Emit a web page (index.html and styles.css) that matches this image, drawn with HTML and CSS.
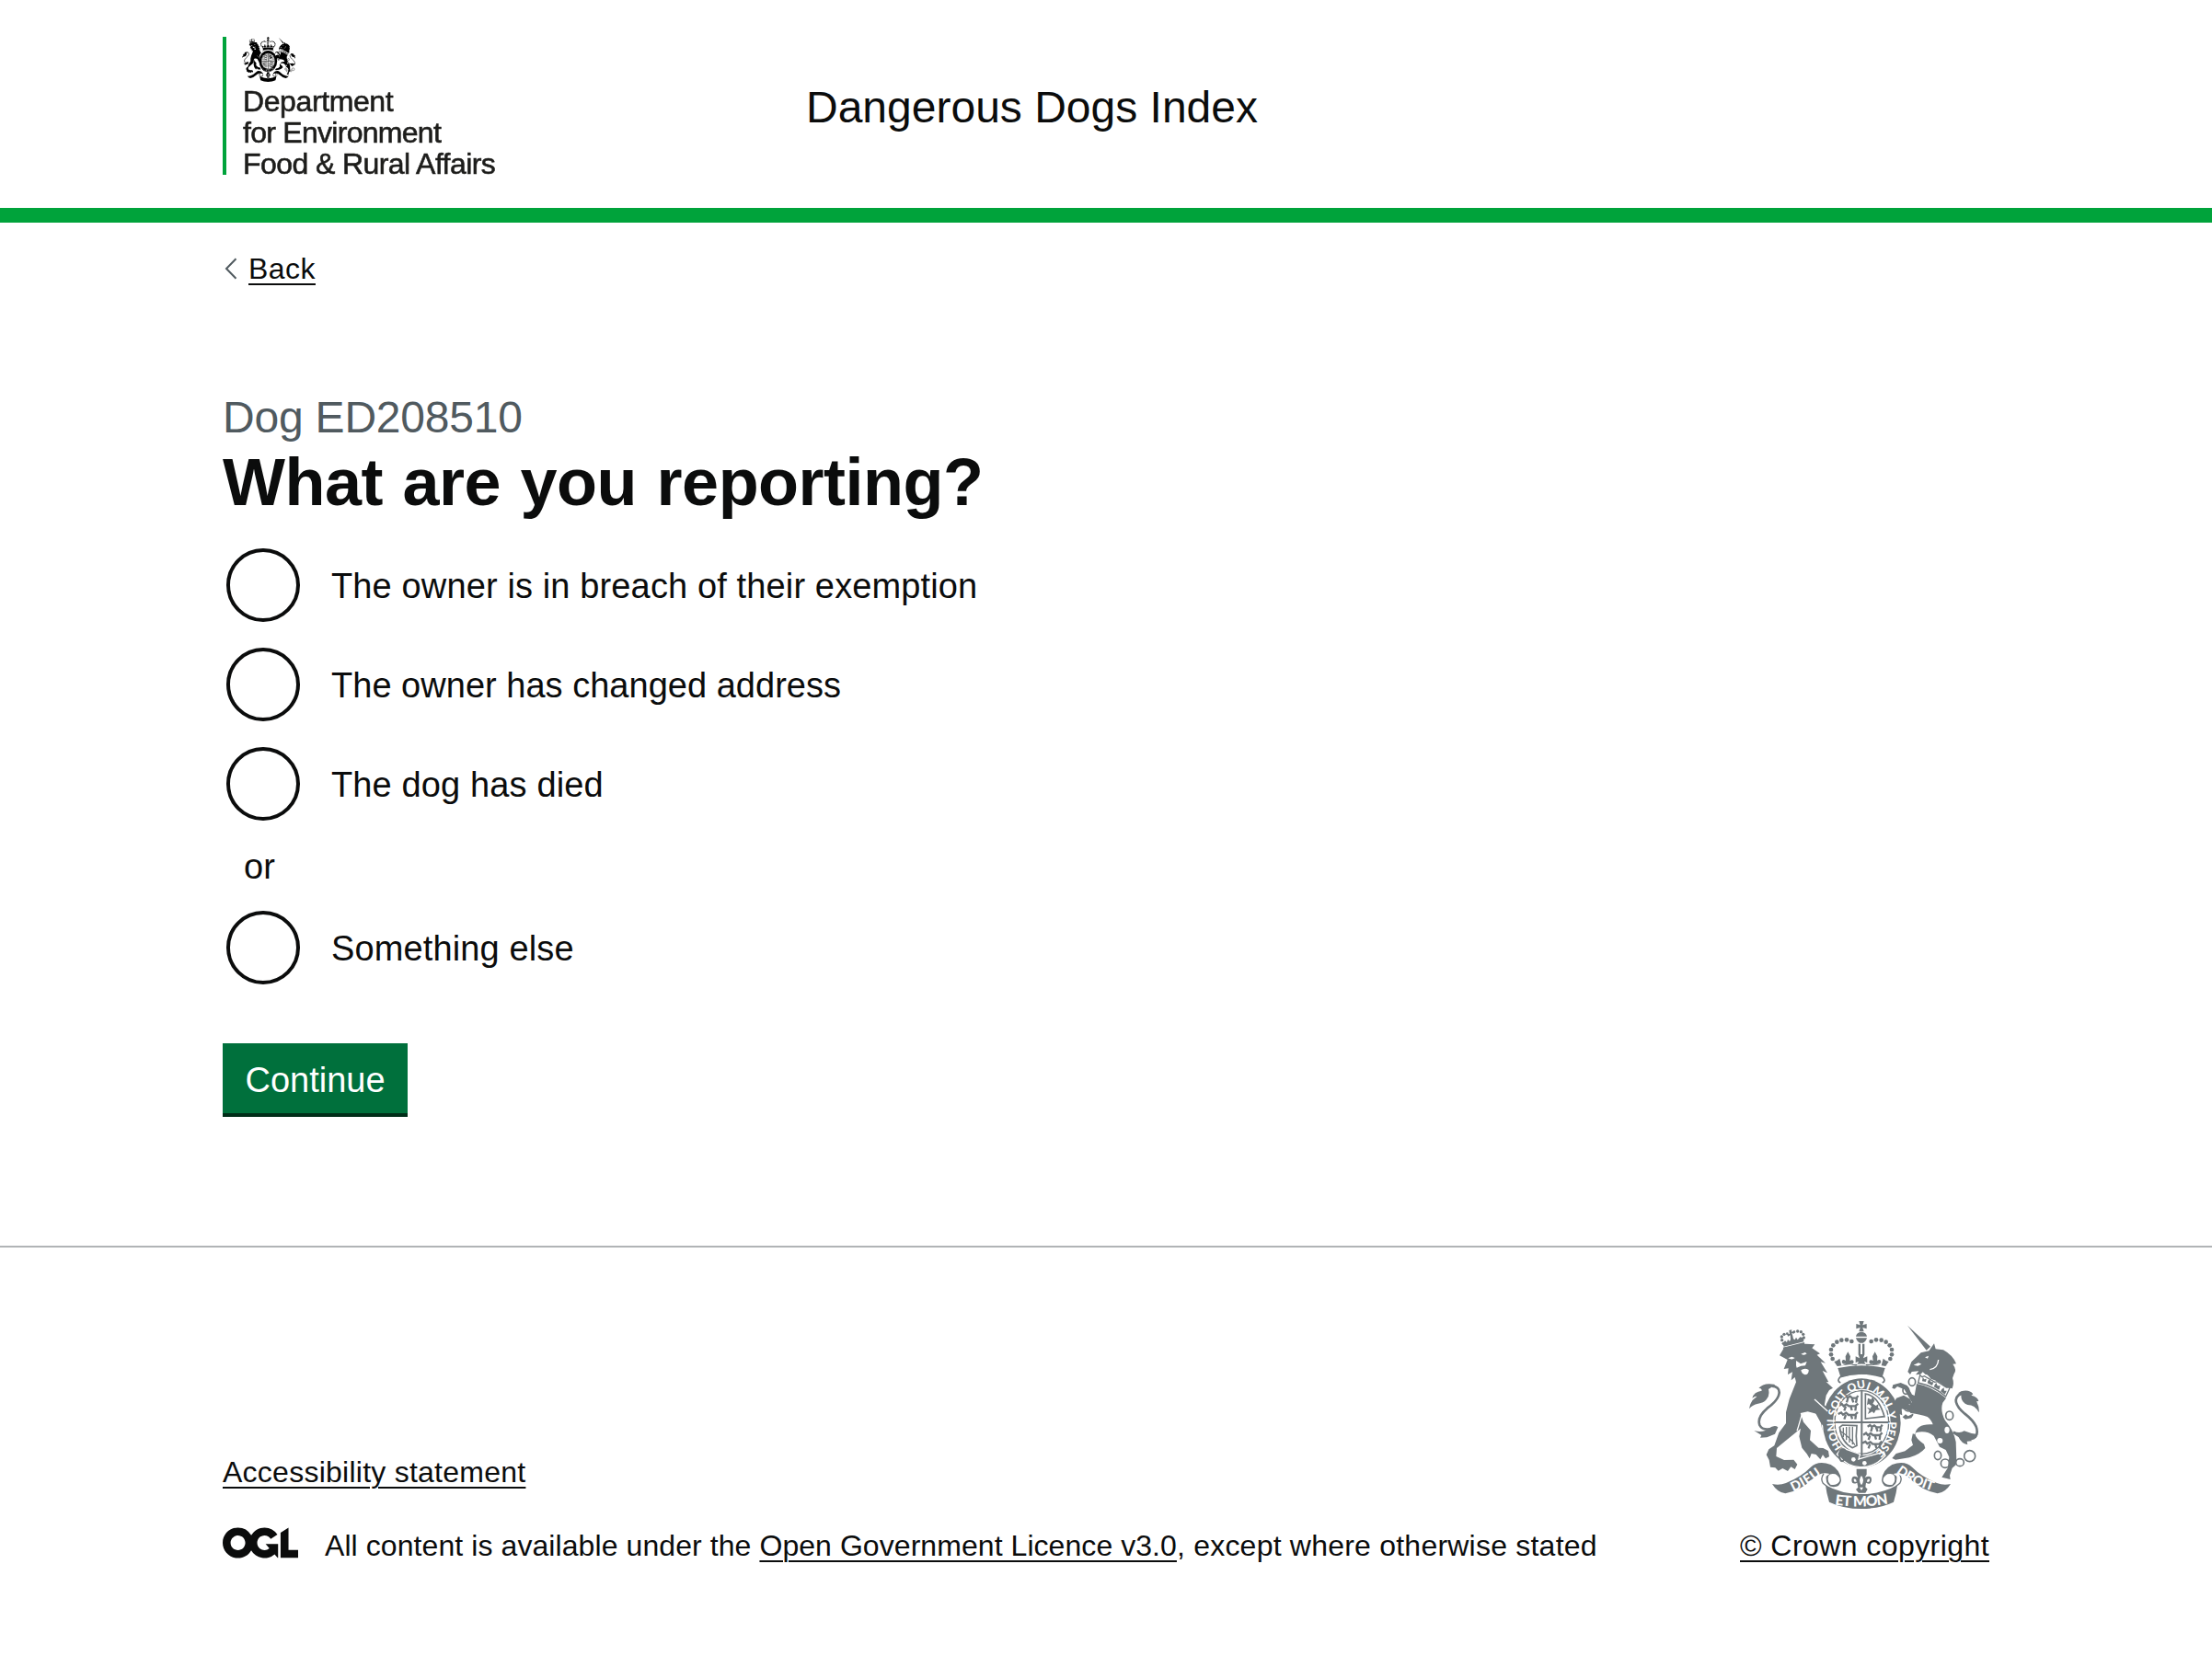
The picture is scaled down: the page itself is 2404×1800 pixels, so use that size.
FILE: index.html
```html
<!DOCTYPE html>
<html lang="en">
<head>
<meta charset="utf-8">
<title>What are you reporting? - Dangerous Dogs Index</title>
<link rel="stylesheet" href="styles.css">
</head>
<body>
<svg class="sprite" aria-hidden="true">
  <symbol id="crest" viewBox="63 48 750 612">
    <g fill="currentColor">
      <!-- imperial crown -->
      <path d="M421 48h16l-4 13 13-4v16l-13-4 4 13h-16l4-13-13 4V57l13 4z"/>
      <path d="M411 98q2-14 18-15 16 1 18 15zM411 103h36q-3 12-13 16h-10q-10-4-13-16zM419 122h7v35h-7zM432 122h7v35h-7z"/>
      <g id="beads">
        <circle cx="397" cy="114" r="7"/><circle cx="381" cy="109" r="7"/><circle cx="364" cy="110" r="7"/><circle cx="349" cy="116" r="7"/><circle cx="337" cy="127" r="7"/><circle cx="330" cy="141" r="7"/><circle cx="330" cy="157" r="7"/><circle cx="335" cy="171" r="7"/>
      </g>
      <use href="#beads" transform="matrix(-1 0 0 1 858 0)"/>
      <path d="M352 201q77-17 154 0l-9 29q-67-18-136 0z"/>
      <path d="M340 180q10-2 18-10l6 23q10-2 14-6-12 4-13-7 2-10 13-3l-1-14 8-15 8 15-2 14q12-6 13 4-1 11-14 6 8 7 24 6l6-14-10 5v-21l13 6-4-13h20l-4 13 13-6v21l-10-5 6 14q16 1 24-6-13 5-14-6 1-10 13-4l-2-14 8-15 8 15-1 14q11-7 13 3-1 11-13 7 4 4 14 6l6-23q8 8 18 10l-10 15q-79-15-158 0z"/>
      <path d="M361 249q-14-6-1-19 69-22 138 0 13 13-1 19" fill="none" stroke="currentColor" stroke-width="5"/>
      <!-- lion -->
      <path d="M173 134l70-17 2 12-66 17z"/>
      <g><circle cx="175" cy="121" r="5"/><circle cx="170" cy="110" r="5"/><circle cx="169" cy="99" r="5"/><circle cx="177" cy="91" r="5"/><circle cx="187" cy="89" r="4"/><circle cx="210" cy="83" r="4"/><circle cx="221" cy="81" r="5"/><circle cx="232" cy="83" r="5"/><circle cx="239" cy="91" r="5"/><circle cx="241" cy="102" r="5"/></g>
      <path d="M193 78l9-2-1 7 8-3 1 9-8-2 3 9 2 10 5 3 4-8 5 8 8-9 11 3 1 12-65 16-4-11 8-8 6 5 3-9 6 6 3-6-1-14-8 4-2-9 8 1z"/>
      <path d="M162 160l15-26 70-12 30 2-9 12 26 18-10 4 28 27-16-4 22 36-16-7 20 37-8-1 22 20-12 7-10 17-6 34 10 8 16 34-4 16 2 14-9 6-14-8-8 9-5-30-11-22-31-8-24 5 10 29 24 28-3 31 28 25 15 1 17 9 3 19-12 6-9-12-8 15-14-16-15-3-6 16-9-15-16-20-9-37 5-26-50 41-28 23-2 27 26 12 31-1 12 15-8 16-13-8-10 14-17-9-14 8-10-10-16-2-4-23-9-17 8-18 18-12 15-42 23-31 0-36 11-43 22-55-4-16-12 10 4-27-15 8 2-20-15 2 12-30z"/>
      <path d="M146 396q-38 13-49-9-9-26 25-55 37-27 39-50 1-21-24-22" fill="none" stroke="currentColor" stroke-width="8"/>
      <path d="M144 254q-35-6-50 13 10-2 10 8-26 3-31 24 10-7 15-5-22 14-25 40 11-14 29-17 18-2 27-13 12-12 7-34l22-14zM79 405q29 8 47-7 20-14 31-4l-10 22-26 11-22 1 4-8z"/>
      <!-- unicorn -->
      <path d="M579 62l75 69-13 12z"/>
      <path d="M592 181l31-30 26-6 17-24 5 18 25 3q31 17 42 45l-11 1q14 20 4 32l-5 14q6 17-1 34-11-4-20-2-20-22-50-30-10-16-17-14l-9-8-7 7-16 2 10-12-23 2-5 9-8-9z"/>
      <path d="M609 252q46 8 96 47l-11 15q-9 26 8 58 29 34 35 70l2 60-2 15-12 10-8 24 2 13-28-7 9-14 11-17 4-35-11-23-20-10-19-36q-24-19-57-11-13 11 25 38l4 13q-17 21-52 31l-45 7-11-5 13-15 29-8 26-20-5-16 9-43-3-36-16-17-22-6-15-14-10 9-8 22-11 4-5-15 17-17 11-19 26 4 22 14 6-10-12-20-12-21-23-10-9 8-8-3 3-10 25-7 21 9 16 29 8 4z"/>
      <path d="M590 348q32 4 54 12 12 8 18 25-30-2-44 8-12 8-14 24l-14-4z" fill="#fff"/>
      <path d="M620 224l7 6 7-3 34 20 8-2 30 19 12 0-14 30q-38-34-90-45z" fill="#fff" stroke="currentColor" stroke-width="4"/>
      <path d="M629 230l5 8 7-2-2 10-12-2zM651 238l5 9 8 0-4 11-16-8 2-8zM673 249l4 10 9 0-4 13-17-10 3-6zM698 265l1 10 8 0-6 12-14-10 4-7z"/>
      <path d="M596 350l-15 8-8-6-10 9 9 7 20-4 7-11z"/>
      <path d="M728 410q42 30 66 20 18-11 9-38-10-21-37-42-29-24-29-45 4-24 35-21" fill="none" stroke="currentColor" stroke-width="8"/>
      <path d="M754 277q27-7 39 9l-6 4q22 5 24 19l-7 1q10 18 8 36-13-25-37-25-22-8-21-33l-10-5zM730 407q20 9 34-1 20 9 44 11l-5 12-21 1 7 9-16 1 2 11q-20-4-29-24z"/>
      <g fill="none" stroke="currentColor" stroke-width="5"><ellipse cx="594" cy="246" rx="11" ry="13"/><ellipse cx="574" cy="274" rx="10" ry="12"/><ellipse cx="582" cy="329" rx="14" ry="13"/><ellipse cx="716" cy="356" rx="12" ry="14" fill="#fff"/><ellipse cx="678" cy="486" rx="11" ry="14"/><circle cx="702" cy="512" r="14"/><ellipse cx="750" cy="509" rx="13" ry="12"/><circle cx="782" cy="488" r="18"/></g>
      <!-- garter and shield -->
      <ellipse cx="430" cy="380" rx="131" ry="149" fill="#fff"/>
      <ellipse cx="430" cy="380" rx="127" ry="145"/>
      <ellipse cx="430" cy="378" rx="94" ry="109" fill="#fff"/>
      <ellipse cx="430" cy="378" rx="88" ry="103" fill="none" stroke="currentColor" stroke-width="4"/>
      <path d="M427 272h6v214h-6zM338 375h184v6H338z"/>
      <g id="lions" fill="none" stroke="currentColor" stroke-width="7">
        <path d="M370 297l8-5 6 6 8-5 7 6h14l5-8M385 300l-4 13M398 300l5 13M414 300l-3 14M356 324l9-6 6 7 9-6 8 6h21l9-8M378 326l-5 14M394 326l4 13M411 326l-2 14M353 351l10-5 6 7 10-6 8 7h21l9-9M378 354l-5 14M395 354l4 13M411 354l-2 14"/>
      </g>
      <use href="#lions" transform="translate(79 95)"/>
      <path d="M442 285q42 6 62 74l-62 7z" fill="none" stroke="currentColor" stroke-width="5"/>
      <path d="M450 299l11 5 4-9 7 12-6 10 10 7 9-6-2 12 8 7-15 1-6 11-6-6-14 8 5-13-8-9 11 4 4-8-9-7-6 4z"/>
      <path d="M358 394l9-7 47 2q-4 33 0 65l-14 7q-36-17-42-67z" fill="none" stroke="currentColor" stroke-width="5"/>
      <path d="M370 395v31M380 393v43M390 392v52M400 392v58M358 405q32 20 50 47" fill="none" stroke="currentColor" stroke-width="4"/>
      <path d="M360 468q9-13 20-2l44 16-4 16 82-24 5 12q-36 41-84 38-42-4-66-34l-8-8z" stroke="#fff" stroke-width="4"/>
      <ellipse cx="366" cy="485" rx="9" ry="20" fill="none" stroke="currentColor" stroke-width="6"/>
      <circle cx="403" cy="499" r="7" fill="#fff"/><circle cx="439" cy="511" r="7" fill="#fff"/>
      <!-- supporters' paws -->
      <path d="M290 300l36 42 12 42-2 20-12-5-8 9-7-16-10-8-22-40z"/>
      <path d="M530 325l13-26 24-9 22 13 4 14-23 5-10 13 2 20-18-8z"/>
      <!-- faces -->
      <path d="M190 169l12-5 10 4q-9 8-22 1zM232 155l13-5 6 4q-8 8-19 1zM216 177l15 10 20-7-5 13-14 1-14 6-2-7zM232 208q12-9 25-1 1 14-12 16-11-3-13-15zM599 191l16-7 10 4-12 6zM636 166l12-5-3 9z" fill="#fff"/>
      <path d="M276 303l43 39M652 206q26-4 28-32M235 352q-12 42-16 54" stroke="#fff" stroke-width="4" fill="none"/>
      <ellipse cx="708" cy="403" rx="8" ry="11" fill="#fff"/><circle cx="685" cy="438" r="9" fill="#fff"/>
      <!-- motto ribbon -->
      <path d="M138 579q24 5 45-3 50-20 80-51 25-25 66-9 32 17 34 52-4 22-26 21-26-3-23-35l11-8q-31-10-60 21-36 34-84 43-26-3-43-31zM720 579q-24 5-45-3-50-20-80-51-25-25-66-9-32 17-34 52 4 22 26 21 26-3 23-35l-11-8q31-10 60 21 36 34 84 43 26-3 43-31z"/>
      <path d="M322 552q6-9 22-5 16 9 14 22-10 17-30 12-12-9-6-29zM536 552q-6-9-22-5-16 9-14 22 10 17 30 12 12-9 6-29z" fill="#fff"/>
      <path d="M306 546q-12 15-2 31l14 11M552 546q12 15 2 31l-14 11" stroke="currentColor" stroke-width="4" fill="none"/>
      <path d="M312 583q54 30 117 29 63 1 117-29-3 27-12 55-46 22-105 22-59 0-105-22-9-28-12-55z"/>
      <path d="M413 530h33v18l-6 10q22-11 22 9-2 17-18 8l-2 14 7 7-7 12h-22l-9-11 7-7-3-15q-17 8-18-9 1-18 21-8l-5-11z"/>
      <path d="M429 552q12 14 0 31-12-17 0-31zM404 563q8-3 9 9-9 3-9-9zM456 563q-8-3-9 9 9 3 9-9zM423 590h12l-6 10z" fill="#fff"/>
    </g>
  </symbol>
</svg>

<header class="header">
  <div class="container header__inner">
    <div class="logo">
      <svg class="logo__crest" viewBox="63 48 750 612" preserveAspectRatio="none" aria-hidden="true"><use href="#crest" x="63" y="48" width="750" height="612"/></svg>
      <span class="logo__line logo__line--1">Department</span>
      <span class="logo__line logo__line--2">for Environment</span>
      <span class="logo__line logo__line--3">Food &amp; Rural Affairs</span>
    </div>
    <div class="header__title">Dangerous Dogs Index</div>
  </div>
</header>

<main class="container main">
  <div class="back">
    <svg class="back__icon" viewBox="0 0 14 24" aria-hidden="true"><path d="M12.500 1.200L2 12l10.500 10.800" fill="none" stroke="#505a5f" stroke-width="2"/></svg>
    <a class="link back__link" href="#">Back</a>
  </div>
  <form class="form">
    <span class="caption">Dog ED208510</span>
    <h1 class="heading">What are you reporting?</h1>
    <div class="radios">
      <label class="radio"><input class="radio__input" type="radio" name="report"><span class="radio__text">The owner is in breach of their exemption</span></label>
      <label class="radio"><input class="radio__input" type="radio" name="report"><span class="radio__text radio__text--snug">The owner has changed address</span></label>
      <label class="radio"><input class="radio__input" type="radio" name="report"><span class="radio__text">The dog has died</span></label>
      <div class="radios__divider">or</div>
      <label class="radio"><input class="radio__input" type="radio" name="report"><span class="radio__text">Something else</span></label>
    </div>
    <button class="button" type="button">Continue</button>
  </form>
</main>

<footer class="footer">
  <div class="container footer__inner">
    <div class="footer__meta">
      <a class="link footer__nav" href="#">Accessibility statement</a>
      <div class="licence">
        <svg class="licence__logo" viewBox="0 0 483.2 195.7" aria-hidden="true"><path fill="currentColor" d="M421.5 142.8V.1l-50.7 32.3v161.1h112.4v-50.7zm-122.3-9.600A47.12 47.12 0 0 1 221 97.800c0-26 21.100-47.100 47.100-47.100 16.700 0 31.400 8.700 39.700 21.800l42.700-27.200A97.630 97.630 0 0 0 268.100 0c-36.500 0-68.300 20.100-85.100 49.700A98 98 0 0 0 97.800 0C43.900 0 0 43.900 0 97.800s43.900 97.800 97.800 97.800c36.500 0 68.300-20.100 85.100-49.700a97.760 97.760 0 0 0 149.600 25.400l19.400 22.200h3v-87.800h-80l24.300 27.500zM97.800 145c-26 0-47.100-21.100-47.100-47.100s21.100-47.100 47.100-47.100 47.100 21.100 47.100 47.100S123.800 145 97.800 145"/></svg>
        <span class="licence__text">All content is available under the <a class="link licence__link" href="#">Open Government Licence v3.0</a><span class="licence__tail">, except where otherwise stated</span></span>
      </div>
    </div>
    <div class="copyright">
      <svg class="copyright__crest" viewBox="63 48 750 612" role="img" aria-label="Royal coat of arms">
        <use href="#crest" x="63" y="48" width="750" height="612"/>
        <defs>
          <path id="garter" pathLength="360" d="M430 495A100 115 0 0 1 430 267A100 115 0 0 1 430 495"/>
          <path id="ribbon-left" d="M207 604Q255 583 306 543"/>
          <path id="ribbon-right" d="M542 541Q592 582 668 604"/>
          <path id="ribbon-mid" d="M342 646Q430 660 520 642"/>
        </defs>
        <g class="motto">
          <g font-size="36">
            <text><textPath href="#garter" startOffset="42">HONI</textPath></text>
            <text><textPath href="#garter" startOffset="103">SOIT</textPath></text>
            <text><textPath href="#garter" startOffset="155">QUI</textPath></text>
            <text><textPath href="#garter" startOffset="200">MAL Y</textPath></text>
            <text><textPath href="#garter" startOffset="267">PENSE</textPath></text>
          </g>
          <text font-size="43"><textPath href="#ribbon-left" textLength="108">DIEU</textPath></text>
          <text font-size="43"><textPath href="#ribbon-right" textLength="134">DROIT</textPath></text>
          <text font-size="47"><textPath href="#ribbon-mid" textLength="176">ET MON</textPath></text>
        </g>
      </svg>
      <a class="link copyright__link" href="#">© Crown copyright</a>
    </div>
  </div>
</footer>
</body>
</html>
```
FILE: styles.css
```css
* {
  box-sizing: border-box;
}

body {
  margin: 0;
  min-height: 1800px;
  background: #fff;
  color: #0b0c0c;
  font-family: "Liberation Sans", Arial, sans-serif;
  font-size: 32px;
  line-height: 40px;
}

.sprite {
  display: none;
}

.container {
  width: 1920px;
  margin: 0 auto;
}

.link {
  color: inherit;
  text-decoration: underline;
  text-decoration-thickness: 2px;
  text-underline-offset: 5px;
}

/* Header */
.header {
  height: 242px;
  border-bottom: 16px solid #00a33b;
}

.header__inner {
  display: flex;
  padding-top: 40px;
}

.logo {
  display: flex;
  flex-direction: column;
  width: 300px;
  height: 150px;
  margin-right: 334px;
  padding-left: 17px;
  border-left: 4px solid #00a33b;
  color: #1d1d1b;
}

.logo__crest {
  flex: none;
  width: 58px;
  height: 49px;
  margin-bottom: 4px;
  color: #000;
  filter: blur(0.6px);
}

.logo__line {
  flex: none;
  height: 34px;
  padding-left: 1px;
  line-height: 34px;
  white-space: nowrap;
  -webkit-text-stroke: 0.6px #1d1d1b;
  filter: blur(0.6px);
}

.logo__line--1 {
  letter-spacing: -0.4px;
}

.logo__line--2 {
  letter-spacing: -0.72px;
}

.logo__line--3 {
  letter-spacing: -0.58px;
}

.header__title {
  padding-top: 47px;
  font-size: 48px;
  line-height: 60px;
}

/* Main content */
.main {
  height: 1112px;
  padding-top: 30px;
}

.back {
  display: flex;
  height: 40px;
}

.back__icon {
  width: 14px;
  height: 24px;
  margin: 8px 12px 0 2px;
}

.back__link {
  letter-spacing: 0.45px;
}

.form {
  padding-top: 112px;
}

.caption {
  display: block;
  color: #505a5f;
  font-size: 48px;
  line-height: 60px;
  letter-spacing: -0.2px;
}

.heading {
  margin: 3px 0 34px;
  font-size: 72px;
  font-weight: 700;
  line-height: 75px;
  letter-spacing: -0.5px;
  word-spacing: 2px;
}

.radios {
  display: flex;
  flex-direction: column;
  gap: 28px;
  margin-left: 4px;
}

.radio {
  display: flex;
  align-items: center;
  height: 80px;
  font-size: 38px;
  line-height: 48px;
}

.radio__input {
  appearance: none;
  width: 80px;
  height: 80px;
  margin: 0 34px 0 0;
  border: 4px solid #0b0c0c;
  border-radius: 50%;
}

.radio__text {
  padding-top: 1px;
  letter-spacing: 0.13px;
}

.radio__text--snug {
  letter-spacing: 0.02px;
}

.radios__divider {
  height: 50px;
  margin: -4px 0 -4px 19px;
  padding-top: 1px;
  font-size: 38px;
  line-height: 50px;
}

.button {
  display: block;
  width: 201px;
  height: 80px;
  margin: 64px 0 0;
  padding: 3px 0 0;
  border: 0;
  border-bottom: 4px solid #002d18;
  background: #00703c;
  color: #fff;
  font: 38px/74px "Liberation Sans", Arial, sans-serif;
  text-align: center;
}

/* Footer */
.footer {
  border-top: 2px solid #b1b4b6;
}

.footer__inner {
  display: flex;
  align-items: flex-end;
  justify-content: space-between;
  padding-top: 80px;
}

.footer__meta {
  display: flex;
  flex-direction: column;
  align-items: flex-start;
  gap: 40px;
}

.footer__nav {
  letter-spacing: 0.25px;
}

.licence {
  display: flex;
}

.licence__logo {
  width: 82px;
  height: 34px;
  margin-right: 29px;
}

.licence__text {
  letter-spacing: 0.08px;
}

.licence__link {
  letter-spacing: 0.06px;
}

.licence__tail {
  letter-spacing: 0.22px;
}

.copyright {
  display: flex;
  flex-direction: column;
  align-items: center;
  gap: 20px;
}

.copyright__crest {
  width: 250px;
  height: 204px;
  margin-right: 2px;
  color: #6f777b;
}

.copyright__link {
  letter-spacing: 0.43px;
}

.motto {
  fill: #fff;
  font-family: Lato, sans-serif;
  font-weight: 900;
}
```
